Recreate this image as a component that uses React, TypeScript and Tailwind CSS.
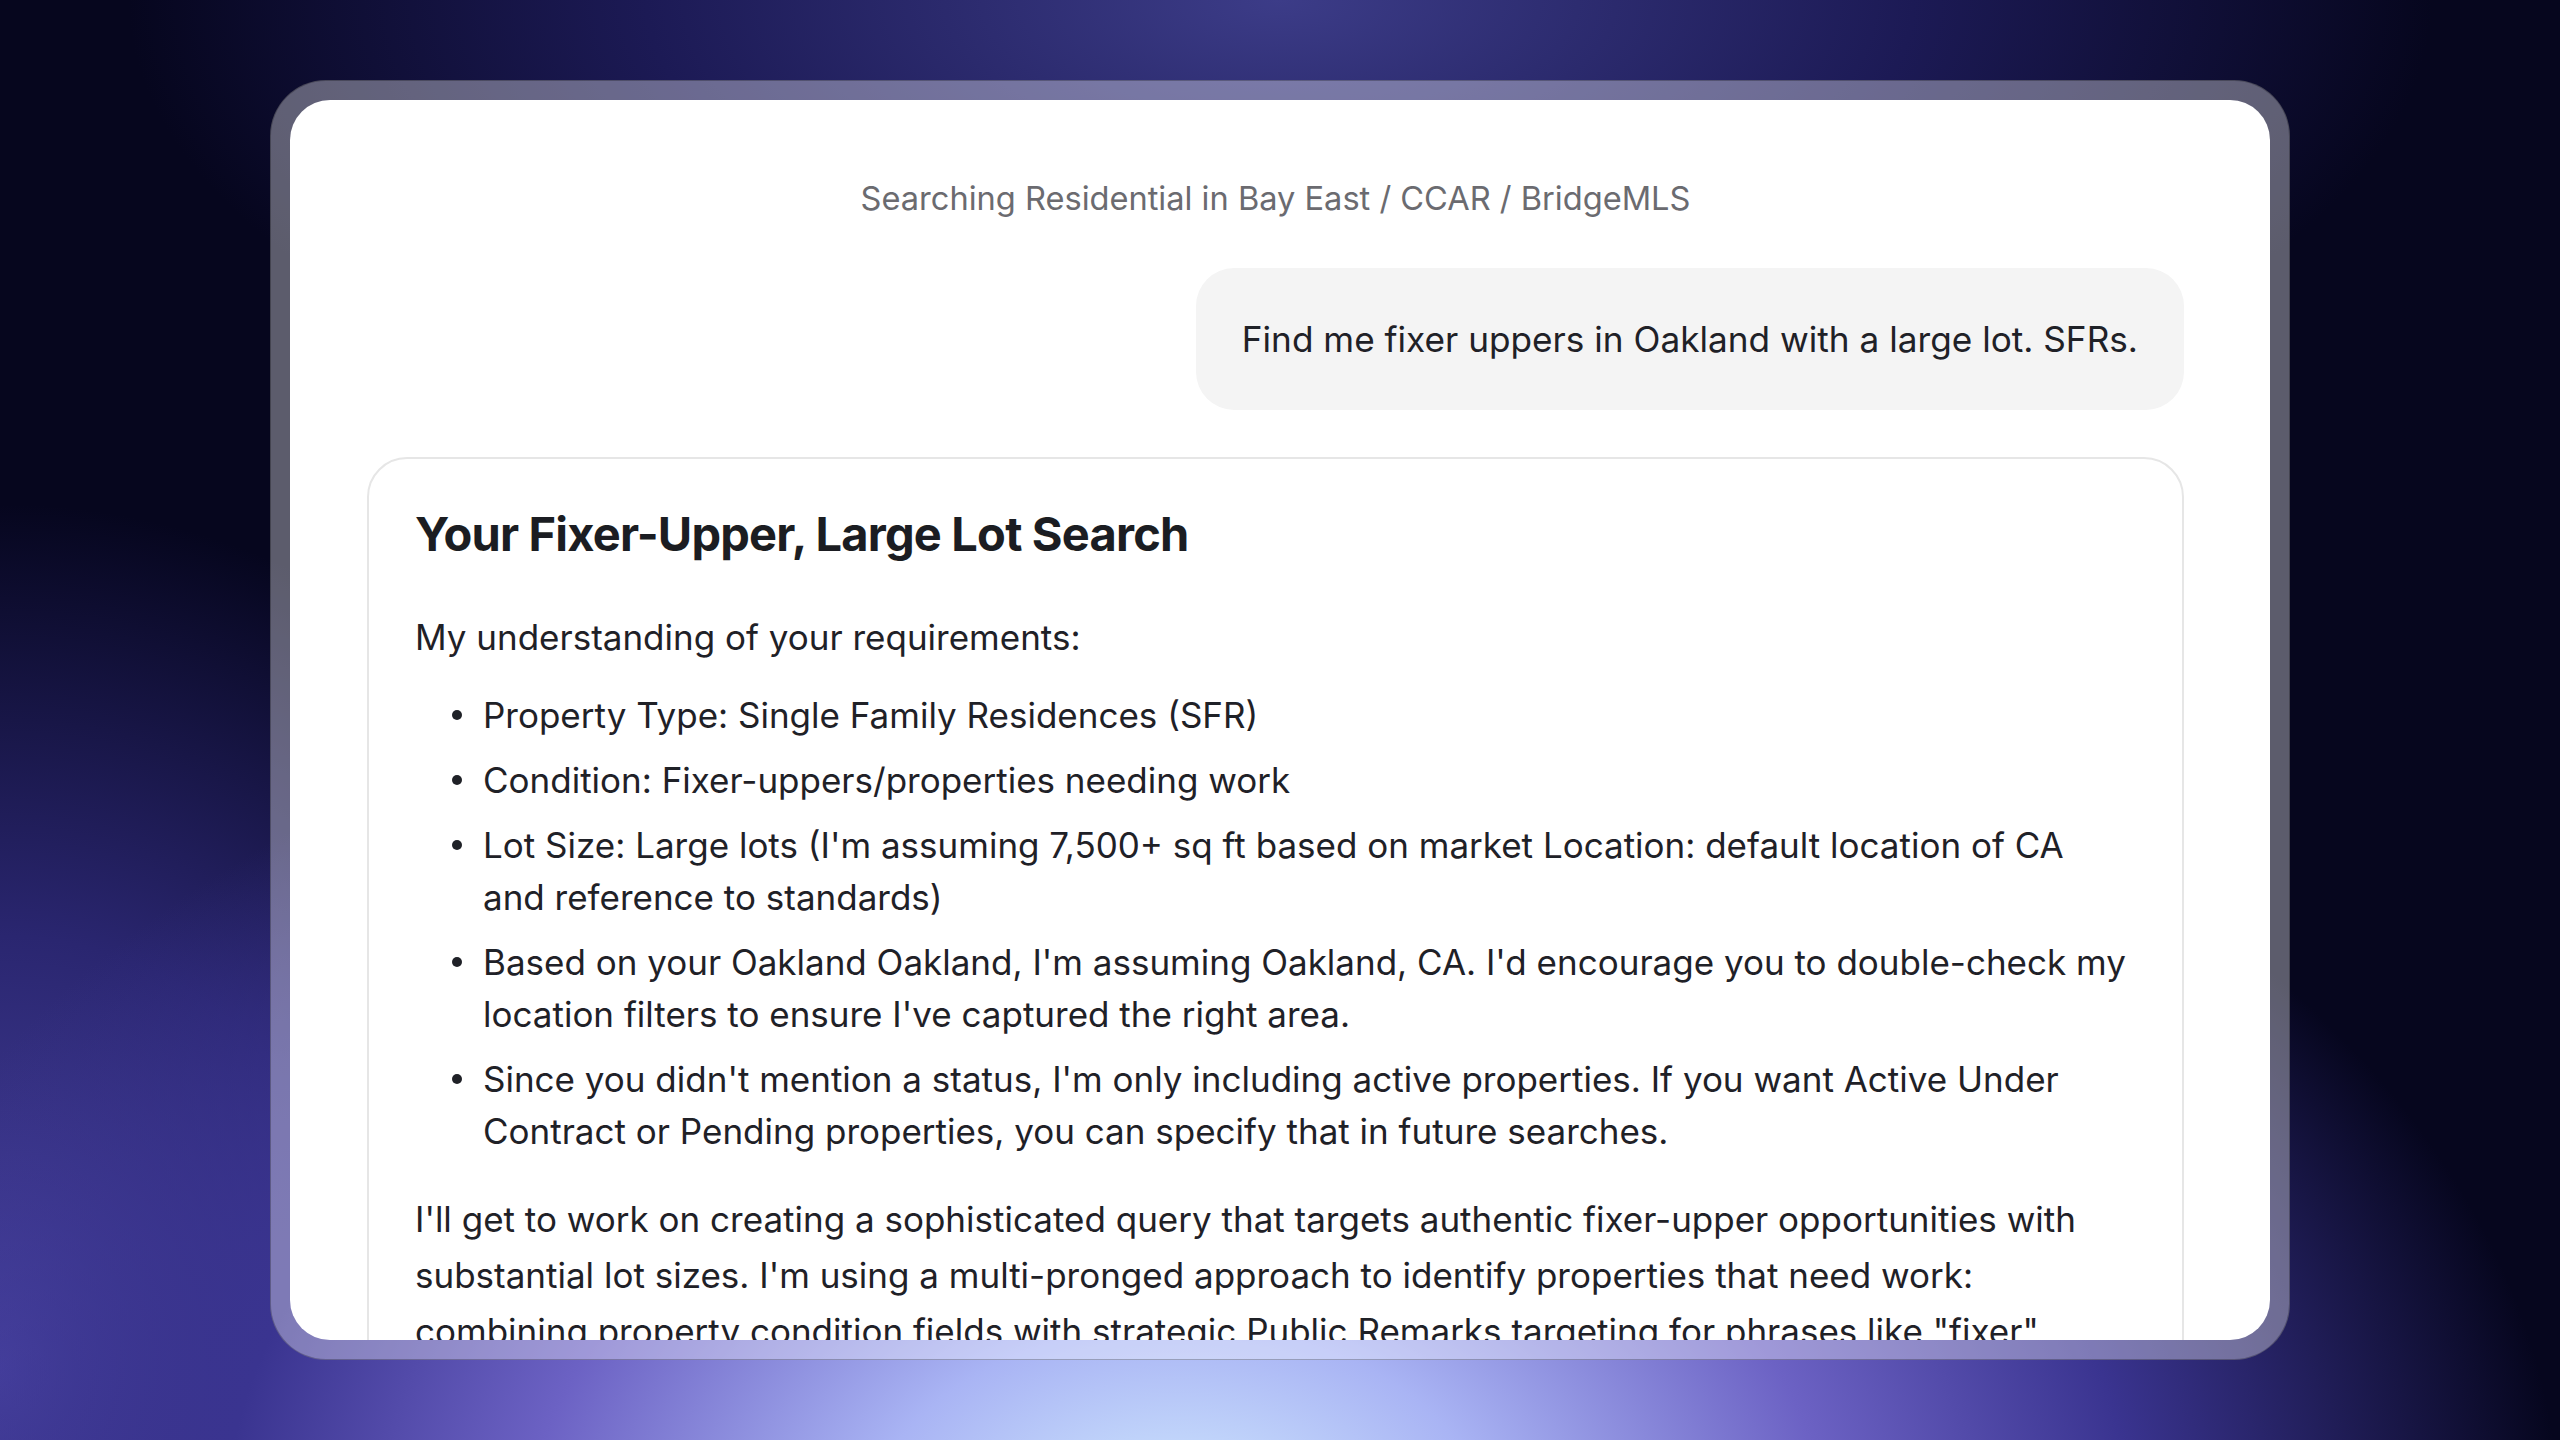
const requirements = [
  "Property Type: Single Family Residences (SFR)",
  "Condition: Fixer-uppers/properties needing work",
  "Lot Size: Large lots (I'm assuming 7,500+ sq ft based on market Location: default location of CA and reference to standards)",
  "Based on your Oakland Oakland, I'm assuming Oakland, CA. I'd encourage you to double-check my location filters to ensure I've captured the right area.",
  "Since you didn't mention a status, I'm only including active properties. If you want Active Under Contract or Pending properties, you can specify that in future searches.",
];

export default function App() {
  return (
    <div className="w-full h-screen flex items-center justify-center bg-[#06061e] bg-[radial-gradient(ellipse_60%_70%_at_46%_106%,#d2ecff_0%,#a9b4f4_20%,#6c62c4_42%,#3a3490_62%,transparent_90%),radial-gradient(ellipse_30%_60%_at_0%_95%,#4a44a2_0%,#2a2670_50%,transparent_100%),radial-gradient(ellipse_45%_35%_at_50%_0%,#3c3c88_0%,#1c1a55_55%,transparent_100%)] font-[family-name:Inter,'Noto_Sans',sans-serif]">
      {/* frame */}
      <div className="w-[2020px] h-[1280px] rounded-[56px] bg-white/35 border border-black/25 p-[19px]">
        <div className="w-full h-full rounded-[40px] bg-white overflow-hidden pt-[78px] pl-[77px] pr-[86px]">
          <div className="text-center text-[32.6px] leading-[40px] text-[#6b6b70]">
            Searching Residential in Bay East / CCAR / BridgeMLS
          </div>

          <div className="flex justify-end mt-[50px]">
            <div className="bg-[#f4f4f4] rounded-[38px] px-[46px] py-[44px] text-[35.2px] leading-[54px] text-[#1f2127]">
              Find me fixer uppers in Oakland with a large lot. SFRs.
            </div>
          </div>

          <div className="mt-[47px] border-2 border-[#e6e6e6] rounded-[40px] pt-[46px] pl-[46px] pr-[51px] pb-10 text-[#1f2127]">
            <h2 className="text-[47px] leading-[58px] font-bold tracking-[-0.8px] text-[#1b1d22]">Your Fixer-Upper, Large Lot Search</h2>

            <p className="mt-[48px] text-[35px] leading-[52px]">My understanding of your requirements:</p>

            <ul className="mt-[26px] pl-[37px] space-y-[13px] text-[35px] leading-[52px]">
              {requirements.map((item) => (
                <li key={item} className="flex gap-[21px]">
                  <span className="mt-[21px] w-[10px] h-[10px] shrink-0 rounded-full bg-[#1f2127]"></span>
                  <span>{item}</span>
                </li>
              ))}
            </ul>

            <p className="mt-[34px] text-[35px] leading-[56px]">
              I'll get to work on creating a sophisticated query that targets authentic fixer-upper opportunities with
              substantial lot sizes. I'm using a multi-pronged approach to identify properties that need work:
              combining property condition fields with strategic Public Remarks targeting for phrases like "fixer"
              "handyman special," "needs TLC," then filtering for lots of 7,500 square feet or more.
            </p>
          </div>
        </div>
      </div>
    </div>
  );
}
